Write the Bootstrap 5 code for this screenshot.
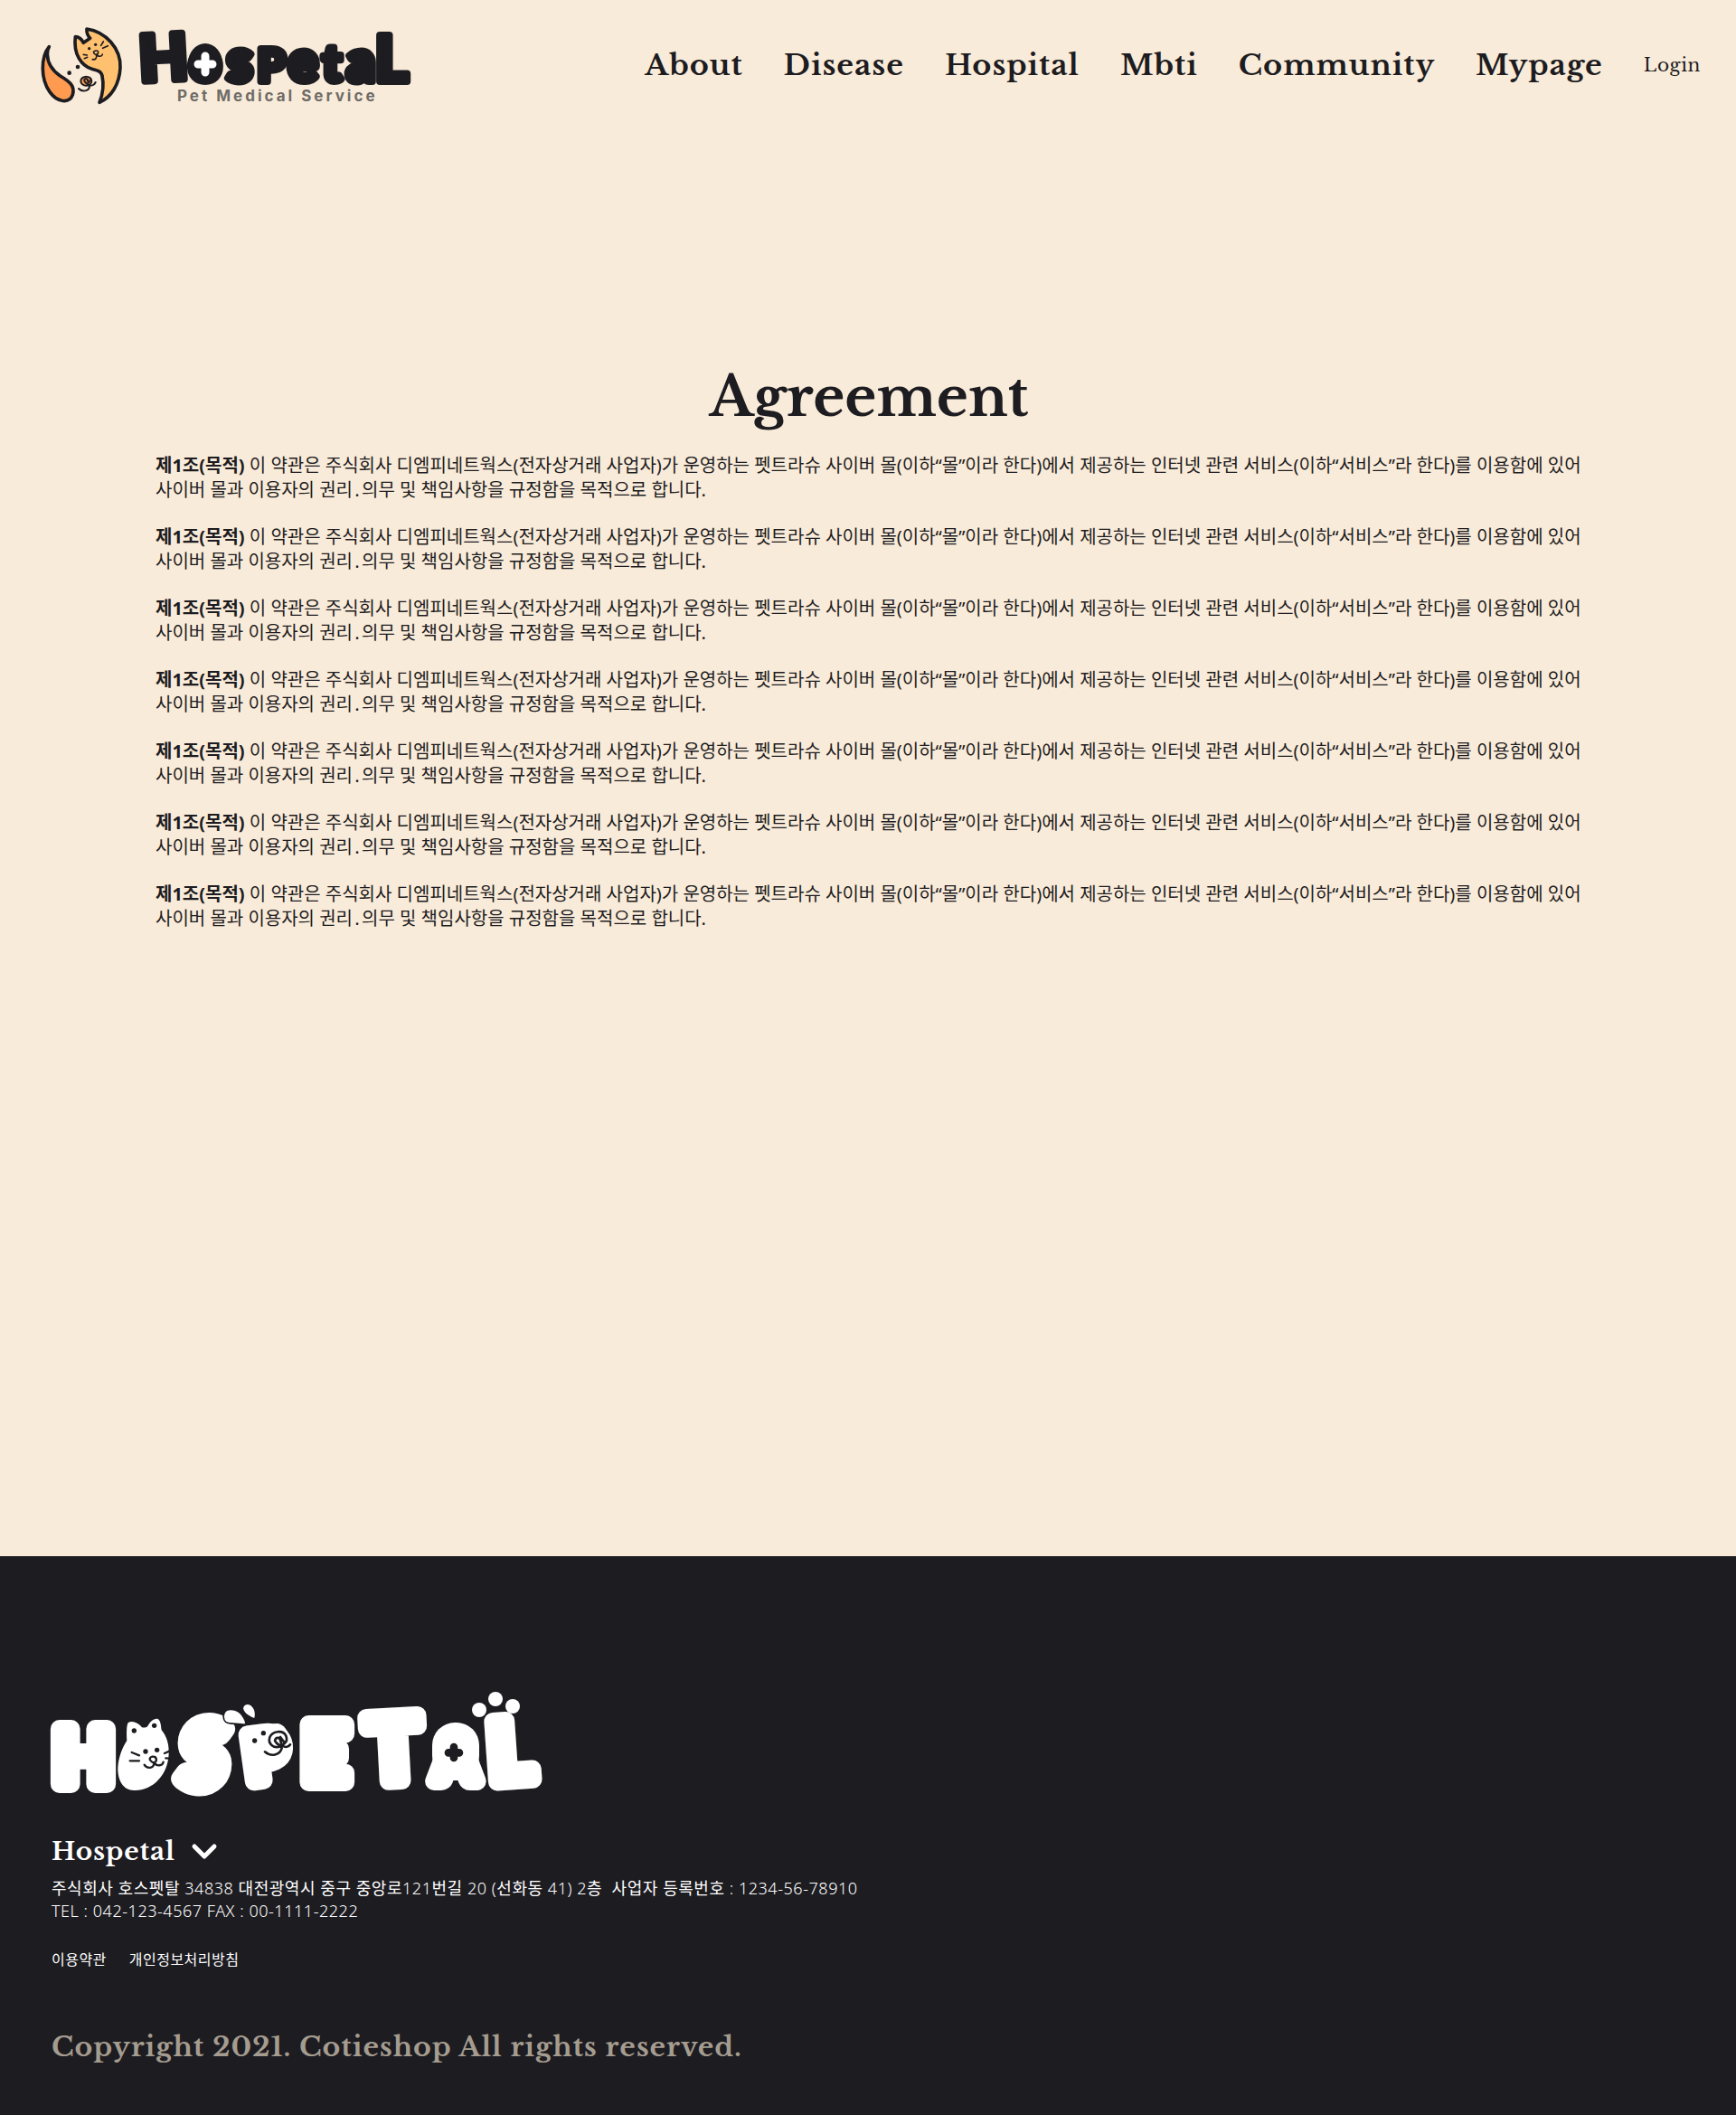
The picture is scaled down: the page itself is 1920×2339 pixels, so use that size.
<!DOCTYPE html>
<html lang="ko">
<head>
<meta charset="utf-8">
<meta name="viewport" content="width=device-width, initial-scale=1">
<title>Hospetal - Agreement</title>
<link href="https://cdn.jsdelivr.net/npm/bootstrap@5.3.0/dist/css/bootstrap.min.css" rel="stylesheet">
<style>
  :root { --cream: #f9ebd9; --ink: #1d1c21; --serif: "Libre Baskerville", "Liberation Serif", serif; }
  body { background: var(--cream); color: var(--ink); font-family: "Noto Sans", "Noto Sans CJK KR", sans-serif; font-size: 20px; line-height: 27px; }
  svg { display: block; overflow: visible; }
  .site-header { padding: 25px 39px 24px 44px; }
  .brand-art { width: 412px; height: 95px; }
  .main-menu { gap: 45px; padding-bottom: 2px; font-family: var(--serif); letter-spacing: .03em; }
  .main-menu a { color: var(--ink); text-decoration: none; font-size: 32px; font-weight: 700; line-height: 48px; letter-spacing: .03em; }
  .main-menu a.login-link { font-size: 20px; font-weight: 400; }
  .terms { padding: 250px 170px 692px 172px; }
  .terms h1 { font-family: var(--serif); font-size: 60px; font-weight: 700; line-height: 90px; margin-bottom: 17px; }
  .terms p { margin: 0 0 25px; word-break: keep-all; }
  .terms p:last-child { margin-bottom: 0; }
  .site-footer { background: var(--ink); color: #fff; padding: 150px 57px 52px; letter-spacing: .03em; }
  .footer-art { width: 546px; height: 119px; letter-spacing: 0; }
  .family-btn { margin-top: 36px; gap: 18px; padding: 0; border: 0; background: none; color: #fff; font: 700 28px/44px var(--serif); letter-spacing: .03em; }
  .site-footer address { margin: 6px 0 30px; font-size: 18px; font-weight: 300; line-height: 25px; letter-spacing: .03em; white-space: pre-wrap; }
  .policy-links { gap: 25px; font-size: 16px; line-height: 22px; }
  .policy-links a { color: #fff; text-decoration: none; letter-spacing: .03em; }
  .copyright { margin: 63px 0 0; color: #a59c90; font: 700 30px/46px var(--serif); letter-spacing: .03em; }
  .wordmark { font-family: Lato, sans-serif; font-weight: 900; text-anchor: middle; stroke-linejoin: round; }
</style>
<script src="https://cdn.jsdelivr.net/npm/bootstrap@5.3.0/dist/js/bootstrap.bundle.min.js" defer></script>
</head>
<body>
<header class="site-header d-flex align-items-center justify-content-between">
  <a href="#" aria-label="Hospetal home">
    <svg class="brand-art" viewBox="44 25 412 95" aria-hidden="true">
      <g transform="translate(30 10) scale(.3333)" fill="none" stroke="#1d1c21" stroke-width="11" stroke-linecap="round" stroke-linejoin="round">
        <path fill="#ffc170" d="M160 92C172 92 182 102 187 112L209 97C200 88 197 78 198 66C260 75 312 130 309 195C306 250 280 292 240 310C250 285 255 250 249 222C246 205 230 203 215 199C180 188 153 150 160 92Z"/>
        <path fill="#ff9b50" d="M73 125C45 160 44 230 75 275C100 310 140 315 151 285C160 255 140 240 110 222C85 205 68 185 67 150C67 140 69 132 73 125Z"/>
        <g fill="#1d1c21" stroke="none"><circle cx="140" cy="212" r="7"/><circle cx="168" cy="192" r="7"/><circle cx="206" cy="131" r="5"/><circle cx="227" cy="118" r="5"/></g>
        <g stroke-width="5"><path d="M187 151L199 153M190 164L200 160M245 121L253 108M251 130L268 122M229 152C218 147 218 140 228 138C238 137 239 147 230 151C232 164 226 169 217 167M231 152C238 160 249 157 250 150"/></g>
        <g stroke-width="6"><ellipse cx="196" cy="239" rx="18" ry="15" fill="#ff9b50"/><path d="M171 264C182 276 204 273 207 258C203 248 195 249 190 238C187 229 203 229 201 239M207 253C216 256 224 250 227 243M209 237L202 246"/></g>
      </g>
      <text class="wordmark" fill="#1d1c21" stroke="#1d1c21" stroke-width="8" font-size="62" y="89"><tspan x="182" y="90" font-size="70" rotate="-3">H</tspan><tspan x="227">o</tspan><tspan x="265" font-size="66">s</tspan><tspan x="300" font-size="49">P</tspan><tspan x="335">e</tspan><tspan x="367" font-size="56">t</tspan><tspan x="399">a</tspan><tspan x="433" font-size="70">L</tspan></text>
      <ellipse cx="227" cy="70" rx="19" ry="22" fill="#1d1c21"/>
      <path d="M227 62V80M219 71H235" stroke="#fff" stroke-width="9" stroke-linecap="round"/>
      <text x="196" y="112" fill="#6e6b68" font-family="Inter, sans-serif" font-size="17" font-weight="700" letter-spacing="3">Pet Medical Service</text>
    </svg>
  </a>
  <nav class="main-menu d-flex align-items-center" aria-label="Main">
    <a href="#">About</a><a href="#">Disease</a><a href="#">Hospital</a><a href="#">Mbti</a><a href="#">Community</a><a href="#">Mypage</a><a class="login-link" href="#">Login</a>
  </nav>
</header>

<main class="terms">
  <h1 class="text-center">Agreement</h1>
  <p><strong>제1조(목적)</strong> 이 약관은 주식회사 디엠피네트웍스(전자상거래 사업자)가 운영하는 펫트라슈 사이버 몰(이하“몰”이라 한다)에서 제공하는 인터넷 관련 서비스(이하“서비스”라 한다)를 이용함에 있어 사이버 몰과 이용자의 권리․의무 및 책임사항을 규정함을 목적으로 합니다.</p>
  <p><strong>제1조(목적)</strong> 이 약관은 주식회사 디엠피네트웍스(전자상거래 사업자)가 운영하는 펫트라슈 사이버 몰(이하“몰”이라 한다)에서 제공하는 인터넷 관련 서비스(이하“서비스”라 한다)를 이용함에 있어 사이버 몰과 이용자의 권리․의무 및 책임사항을 규정함을 목적으로 합니다.</p>
  <p><strong>제1조(목적)</strong> 이 약관은 주식회사 디엠피네트웍스(전자상거래 사업자)가 운영하는 펫트라슈 사이버 몰(이하“몰”이라 한다)에서 제공하는 인터넷 관련 서비스(이하“서비스”라 한다)를 이용함에 있어 사이버 몰과 이용자의 권리․의무 및 책임사항을 규정함을 목적으로 합니다.</p>
  <p><strong>제1조(목적)</strong> 이 약관은 주식회사 디엠피네트웍스(전자상거래 사업자)가 운영하는 펫트라슈 사이버 몰(이하“몰”이라 한다)에서 제공하는 인터넷 관련 서비스(이하“서비스”라 한다)를 이용함에 있어 사이버 몰과 이용자의 권리․의무 및 책임사항을 규정함을 목적으로 합니다.</p>
  <p><strong>제1조(목적)</strong> 이 약관은 주식회사 디엠피네트웍스(전자상거래 사업자)가 운영하는 펫트라슈 사이버 몰(이하“몰”이라 한다)에서 제공하는 인터넷 관련 서비스(이하“서비스”라 한다)를 이용함에 있어 사이버 몰과 이용자의 권리․의무 및 책임사항을 규정함을 목적으로 합니다.</p>
  <p><strong>제1조(목적)</strong> 이 약관은 주식회사 디엠피네트웍스(전자상거래 사업자)가 운영하는 펫트라슈 사이버 몰(이하“몰”이라 한다)에서 제공하는 인터넷 관련 서비스(이하“서비스”라 한다)를 이용함에 있어 사이버 몰과 이용자의 권리․의무 및 책임사항을 규정함을 목적으로 합니다.</p>
  <p><strong>제1조(목적)</strong> 이 약관은 주식회사 디엠피네트웍스(전자상거래 사업자)가 운영하는 펫트라슈 사이버 몰(이하“몰”이라 한다)에서 제공하는 인터넷 관련 서비스(이하“서비스”라 한다)를 이용함에 있어 사이버 몰과 이용자의 권리․의무 및 책임사항을 규정함을 목적으로 합니다.</p>
</main>

<footer class="site-footer">
  <svg class="footer-art" viewBox="57 1871 546 119" role="img" aria-label="Hospetal">
    <rect x="478" y="1905" width="52" height="62" rx="25" fill="#fff"/>
    <text class="wordmark" fill="#fff" stroke="#fff" stroke-width="20" font-size="90" y="1973"><tspan x="92" font-size="84">H</tspan><tspan x="225" y="1976" font-size="98" font-style="italic">S</tspan><tspan x="298" y="1971" font-size="72" rotate="-8">P</tspan><tspan x="360" font-size="88">E</tspan><tspan x="437" y="1971" font-size="98" rotate="-3">T</tspan><tspan x="504" y="1970" font-size="66">A</tspan><tspan x="567" y="1971" font-size="92" rotate="-4">L</tspan></text>
    <g fill="#fff"><circle cx="530" cy="1891" r="8"/><circle cx="548" cy="1879" r="8"/><circle cx="567" cy="1887" r="8"/></g>
    <g transform="translate(40 1860) scale(.3333)" stroke-linecap="round" stroke-linejoin="round">
      <path fill="#fff" d="M301 195C300 175 299 140 306 135C320 126 343 140 351 151C358 153 366 151 370 147C377 133 392 119 404 123C414 129 414 148 416 160C434 182 442 210 440 240C437 310 385 362 325 360C288 360 270 325 271 285C273 250 286 218 301 195Z"/>
      <path fill="#fff" stroke="#1d1c21" stroke-width="5" d="M693 143C670 136 643 143 629 133C617 123 620 99 635 93C652 88 672 96 681 107C691 120 699 135 693 143ZM726 123C710 119 688 106 685 89C684 74 700 68 714 77C727 88 730 107 726 123Z"/>
      <ellipse cx="798" cy="196" rx="42" ry="58" fill="#fff"/>
      <g fill="#1d1c21"><circle cx="325" cy="162" r="8"/><circle cx="392" cy="145" r="8"/><circle cx="363" cy="231" r="8"/><circle cx="401" cy="226" r="8"/><circle cx="754" cy="170" r="8"/><circle cx="725" cy="195" r="8"/></g>
      <g fill="none" stroke="#1d1c21" stroke-width="7"><path d="M317 234L342 244M311 262H342M426 237L442 230M430 253L442 254M391 269C376 263 371 251 386 248C401 247 403 262 391 269C391 287 368 290 359 275M392 269C400 281 419 279 422 266"/></g>
      <g fill="none" stroke="#1d1c21" stroke-width="8"><path d="M811 213C789 224 768 205 775 184C783 163 819 158 829 179C839 202 813 217 799 205C784 192 801 178 809 190L813 203M810 183L825 203M759 232C779 250 810 243 815 220C807 208 796 204 792 195M817 212C827 218 838 216 843 208"/></g>
      <path d="M1386 216V252M1368 235H1404" fill="none" stroke="#1d1c21" stroke-width="26"/>
    </g>
  </svg>
  <button type="button" class="family-btn d-flex align-items-center">Hospetal
    <svg width="28" height="20" viewBox="0 0 28 20" fill="none" stroke="#fff" stroke-width="5" stroke-linecap="round" stroke-linejoin="round" aria-hidden="true"><path d="M3 4L14 15L25 4"/></svg>
  </button>
  <address><span class="fw-normal">주식회사 호스펫탈</span> 34838 <span class="fw-normal">대전광역시 중구 중앙로</span>121<span class="fw-normal">번길</span> 20 (<span class="fw-normal">선화동</span> 41) 2<span class="fw-normal">층  사업자 등록번호</span> : 1234-56-78910
TEL : 042-123-4567 FAX : 00-1111-2222</address>
  <nav class="policy-links d-flex" aria-label="Policies"><a href="#">이용약관</a><a href="#">개인정보처리방침</a></nav>
  <p class="copyright">Copyright 2021. Cotieshop All rights reserved.</p>
</footer>
</body>
</html>
